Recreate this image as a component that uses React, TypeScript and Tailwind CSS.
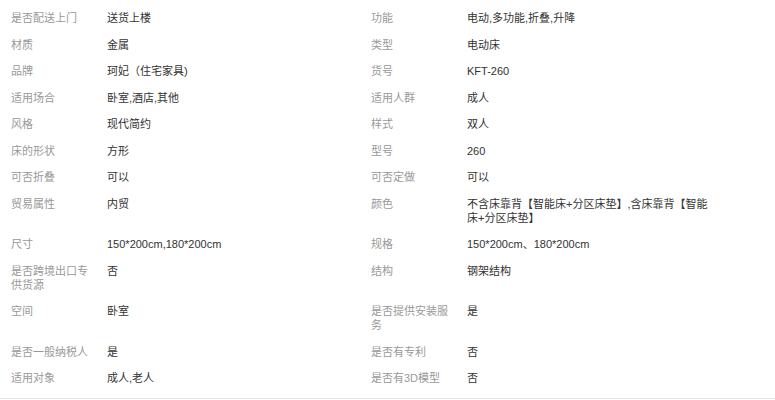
const rows: [string, string, string, string][] = [
  ['是否配送上门', '送货上楼', '功能', '电动,多功能,折叠,升降'],
  ['材质', '金属', '类型', '电动床'],
  ['品牌', '珂妃（住宅家具)', '货号', 'KFT-260'],
  ['适用场合', '卧室,酒店,其他', '适用人群', '成人'],
  ['风格', '现代简约', '样式', '双人'],
  ['床的形状', '方形', '型号', '260'],
  ['可否折叠', '可以', '可否定做', '可以'],
  ['贸易属性', '内贸', '颜色', '不含床靠背【智能床+分区床垫】,含床靠背【智能床+分区床垫】'],
  ['尺寸', '150*200cm,180*200cm', '规格', '150*200cm、180*200cm'],
  ['是否跨境出口专供货源', '否', '结构', '钢架结构'],
  ['空间', '卧室', '是否提供安装服务', '是'],
  ['是否一般纳税人', '是', '是否有专利', '否'],
  ['适用对象', '成人,老人', '是否有3D模型', '否'],
]

function Cell({ label, value }: { label: string; value: string }) {
  return (
    <div className="flex w-[360px] shrink-0">
      <div className="w-[107px] shrink-0 pl-[11px] pr-[11px] text-[#999]">{label}</div>
      <div className="w-[253px] shrink-0 pr-[7px] text-[#333]">{value}</div>
    </div>
  )
}

export default function App() {
  return (
    <div
      className="w-full bg-white border-b border-[#e6e6e6] pt-[5px] pb-[6px] text-[11px] leading-[14px]"
      style={{ fontFamily: '"Liberation Sans", "Noto Sans CJK SC", sans-serif' }}
    >
      {rows.map(([l1, v1, l2, v2]) => (
        <div key={l1} className="flex pt-[6px] pb-[6.5px]">
          <Cell label={l1} value={v1} />
          <Cell label={l2} value={v2} />
        </div>
      ))}
    </div>
  )
}
